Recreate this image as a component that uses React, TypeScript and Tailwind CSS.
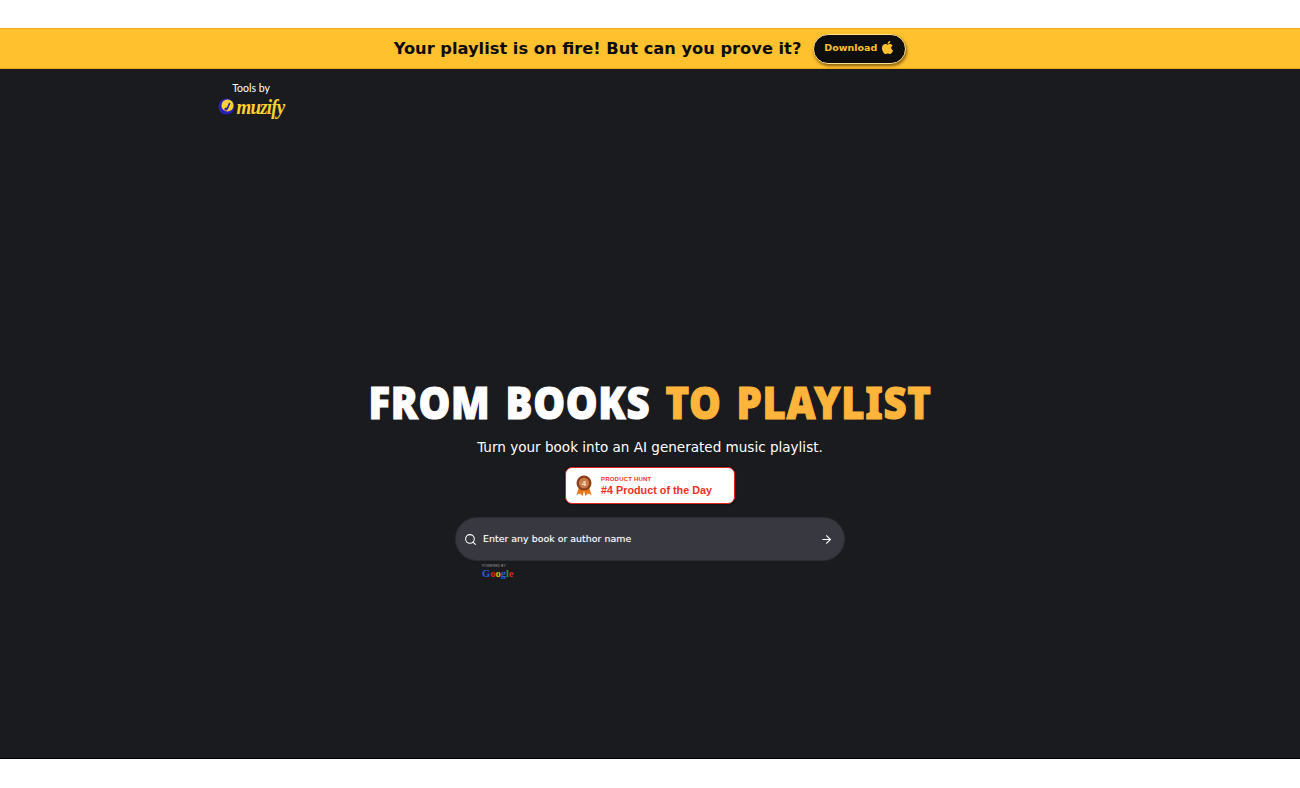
import React from 'react';
import { Search, ArrowRight } from 'lucide-react';
import { FaApple } from 'react-icons/fa';

function MuzifyLogo() {
  return (
    <div className="flex items-center justify-center h-[24px] -mt-[1px]">
      <svg width="17" height="17" viewBox="0 0 17 17" className="mr-[2px]">
        <circle cx="8.5" cy="8.5" r="8" fill="#2a22b8" />
        <circle cx="9.5" cy="7.5" r="6" fill="#ffd12e" />
        <path d="M8 11.5 L11 4.5 L12.5 5.2 L10 11 Z" fill="#2a22b8" />
        <circle cx="8" cy="11" r="1.6" fill="#2a22b8" />
      </svg>
      <span className="font-['Liberation_Serif',serif] font-bold italic text-[19px] leading-none tracking-[-0.8px] scale-y-[1.15] text-[#ffd12e]">
        muzify
      </span>
    </div>
  );
}

function RibbonBadge() {
  return (
    <svg width="18" height="22" viewBox="0 0 18 22">
      <path d="M4 12 L1.5 20 L5 18.6 L7.5 21 L9.5 14 Z" fill="#e8761a" />
      <path d="M14 12 L16.5 20 L13 18.6 L10.5 21 L8.5 14 Z" fill="#e8761a" />
      <circle cx="9" cy="8" r="7.5" fill="#8a3f1d" />
      <circle cx="9" cy="8" r="5.2" fill="#c97a45" />
      <text x="9" y="11" textAnchor="middle" fontSize="8" fontWeight="700" fontFamily="Liberation Sans, sans-serif" fill="#fbe3c8">
        4
      </text>
    </svg>
  );
}

export default function App() {
  return (
    <div className="min-h-[788px] bg-white pt-[28px] pb-[29px] font-['DejaVu_Sans',sans-serif]">
      {/* Top banner */}
      <div className="h-[41px] bg-[#ffc12e] border-t border-b border-[#f0a818] flex items-center justify-center gap-[12px]">
        <span className="text-[16.25px] leading-[22px] pt-[1px] font-bold text-[#0c0c0c]">Your playlist is on fire! But can you prove it?</span>
        <button className="h-[30px] w-[93px] rounded-full bg-[#0e0e0e] border border-[#ffe08a] shadow-[1px_2px_3px_rgba(90,60,0,0.7)] flex items-center justify-center gap-[3px] text-[#ffc12e] text-[9.5px] font-bold">
          Download
          <FaApple className="text-[15px] mb-[2px]" />
        </button>
      </div>

      {/* Main */}
      <div className="h-[690px] bg-[#1a1b1f] border-b border-black flex flex-col">
        <div className="w-[1300px] pl-[217px] pt-[13px]">
          <div className="w-[68px] flex flex-col items-center">
            <span className="text-[10.5px] leading-[13px] text-white font-['Lato',sans-serif]">Tools by</span>
            <MuzifyLogo />
          </div>
        </div>

        <div className="flex flex-col items-center mt-[259px]">
          <h1 className="font-['Noto_Sans',sans-serif] font-black text-[40px] leading-[52px] tracking-[0.7px] [word-spacing:4px] scale-y-[1.1] [-webkit-text-stroke:1px_currentColor] text-white whitespace-nowrap">
            FROM BOOKS <span className="text-[#ffb53b]">TO PLAYLIST</span>
          </h1>
          <p className="mt-[8px] text-[13.55px] leading-[20px] text-white">Turn your book into an AI generated music playlist.</p>

          <div className="mt-[10px] w-[170px] h-[37px] bg-white rounded-[7px] border border-[#e0261c] shadow-[0_0_2px_#000] flex items-center pl-[9px] gap-[8px] font-['Liberation_Sans',sans-serif]">
            <RibbonBadge />
            <div className="flex flex-col text-[#f0301f]">
              <span className="text-[6px] leading-[8px] font-bold tracking-[0.2px]">PRODUCT HUNT</span>
              <span className="text-[10.8px] leading-[14px] font-bold">#4 Product of the Day</span>
            </div>
          </div>

          <div className="mt-[13px] w-[390px] h-[44px] rounded-full bg-[#383840] border border-[#2c2c33] flex items-center pl-[8px] pr-[11px] text-white">
            <Search size={13} strokeWidth={2} />
            <span className="ml-[6px] text-[9.45px] flex-1 [text-shadow:0_0_1px_rgba(255,255,255,0.4)]">Enter any book or author name</span>
            <ArrowRight size={13} strokeWidth={2} />
          </div>

          <div className="w-[390px] pl-[27px] mt-[3px] flex flex-col">
            <span className="text-[3.5px] leading-[5px] text-[#9a9a9a] font-['Liberation_Sans',sans-serif]">POWERED BY</span>
            <span className="font-['Liberation_Serif',serif] font-bold text-[10.5px] leading-[9px]">
              <span className="text-[#2a5ee0]">G</span>
              <span className="text-[#d8281c]">o</span>
              <span className="text-[#e8b00c]">o</span>
              <span className="text-[#2a5ee0]">g</span>
              <span className="text-[#1f9a3a]">l</span>
              <span className="text-[#d8281c]">e</span>
            </span>
          </div>
        </div>
      </div>
    </div>
  );
}
